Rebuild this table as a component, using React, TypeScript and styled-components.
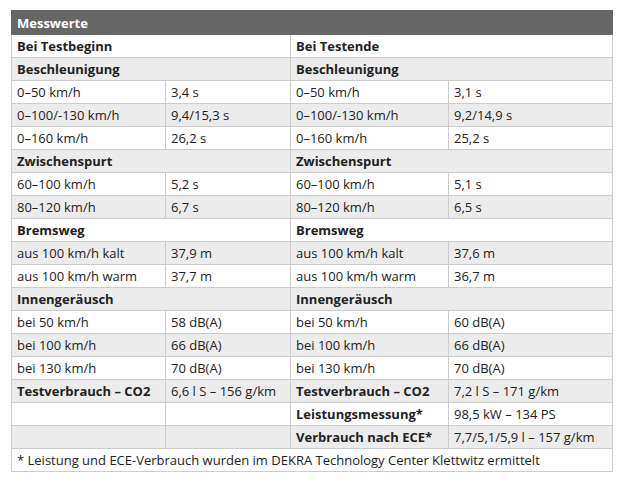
import { FC } from "react";
import styled, { createGlobalStyle } from "styled-components";

type Half =
  | { kind: "section"; title: string }
  | { kind: "data"; label: string; value: string; bold?: boolean }
  | { kind: "empty" };

type RowType = [Half, Half];

const GlobalStyle = createGlobalStyle`
  body {
    margin: 0;
    background: #ffffff;
    font-family: "Open Sans", "Liberation Sans", sans-serif;
    color: #222222;
  }
`;

const Page = styled.div`
  padding: 10px 8px 0 11px;
`;

const Table = styled.table`
  border-collapse: collapse;
  width: 601px;
  table-layout: fixed;
  font-size: 13px;
  line-height: 18px;
`;

const HeadCell = styled.th`
  background: #666666;
  color: #ffffff;
  font-weight: 700;
  text-align: left;
  height: 24px;
  padding: 0 5px;
  border: 1px solid #666666;
  box-sizing: border-box;
`;

const Row = styled.tr`
  background: #ffffff;

  &:nth-child(even) {
    background: #ececec;
  }
`;

const Cell = styled.td<{ $bold?: boolean }>`
  height: 23px;
  padding: 0 5px;
  border: 1px solid #cccccc;
  box-sizing: border-box;
  font-weight: ${({ $bold }) => ($bold ? 700 : 400)};
  white-space: nowrap;
  vertical-align: middle;
`;

const rows: RowType[] = [
  [
    { kind: "section", title: "Bei Testbeginn" },
    { kind: "section", title: "Bei Testende" },
  ],
  [
    { kind: "section", title: "Beschleunigung" },
    { kind: "section", title: "Beschleunigung" },
  ],
  [
    { kind: "data", label: "0–50 km/h", value: "3,4 s" },
    { kind: "data", label: "0–50 km/h", value: "3,1 s" },
  ],
  [
    { kind: "data", label: "0–100/-130 km/h", value: "9,4/15,3 s" },
    { kind: "data", label: "0–100/-130 km/h", value: "9,2/14,9 s" },
  ],
  [
    { kind: "data", label: "0–160 km/h", value: "26,2 s" },
    { kind: "data", label: "0–160 km/h", value: "25,2 s" },
  ],
  [
    { kind: "section", title: "Zwischenspurt" },
    { kind: "section", title: "Zwischenspurt" },
  ],
  [
    { kind: "data", label: "60–100 km/h", value: "5,2 s" },
    { kind: "data", label: "60–100 km/h", value: "5,1 s" },
  ],
  [
    { kind: "data", label: "80–120 km/h", value: "6,7 s" },
    { kind: "data", label: "80–120 km/h", value: "6,5 s" },
  ],
  [
    { kind: "section", title: "Bremsweg" },
    { kind: "section", title: "Bremsweg" },
  ],
  [
    { kind: "data", label: "aus 100 km/h kalt", value: "37,9 m" },
    { kind: "data", label: "aus 100 km/h kalt", value: "37,6 m" },
  ],
  [
    { kind: "data", label: "aus 100 km/h warm", value: "37,7 m" },
    { kind: "data", label: "aus 100 km/h warm", value: "36,7 m" },
  ],
  [
    { kind: "section", title: "Innengeräusch" },
    { kind: "section", title: "Innengeräusch" },
  ],
  [
    { kind: "data", label: "bei 50 km/h", value: "58 dB(A)" },
    { kind: "data", label: "bei 50 km/h", value: "60 dB(A)" },
  ],
  [
    { kind: "data", label: "bei 100 km/h", value: "66 dB(A)" },
    { kind: "data", label: "bei 100 km/h", value: "66 dB(A)" },
  ],
  [
    { kind: "data", label: "bei 130 km/h", value: "70 dB(A)" },
    { kind: "data", label: "bei 130 km/h", value: "70 dB(A)" },
  ],
  [
    { kind: "data", label: "Testverbrauch – CO2", value: "6,6 l S – 156 g/km", bold: true },
    { kind: "data", label: "Testverbrauch – CO2", value: "7,2 l S – 171 g/km", bold: true },
  ],
  [
    { kind: "empty" },
    { kind: "data", label: "Leistungsmessung*", value: "98,5 kW – 134 PS", bold: true },
  ],
  [
    { kind: "empty" },
    { kind: "data", label: "Verbrauch nach ECE*", value: "7,7/5,1/5,9 l – 157 g/km", bold: true },
  ],
];

const HalfCells: FC<{ half: Half }> = ({ half }) => {
  if (half.kind === "section") {
    return (
      <Cell colSpan={2} $bold>
        {half.title}
      </Cell>
    );
  }
  if (half.kind === "empty") {
    return (
      <>
        <Cell />
        <Cell />
      </>
    );
  }
  return (
    <>
      <Cell $bold={half.bold}>{half.label}</Cell>
      <Cell>{half.value}</Cell>
    </>
  );
};

const MeasureTable: FC<{ rows: RowType[] }> = ({ rows }) => (
  <Table>
    <colgroup>
      <col style={{ width: 154 }} />
      <col style={{ width: 125 }} />
      <col style={{ width: 158 }} />
      <col style={{ width: 164 }} />
    </colgroup>
    <thead>
      <tr>
        <HeadCell colSpan={4}>Messwerte</HeadCell>
      </tr>
    </thead>
    <tbody>
      {rows.map(([left, right], i) => (
        <Row key={i}>
          <HalfCells half={left} />
          <HalfCells half={right} />
        </Row>
      ))}
      <Row>
        <Cell colSpan={4}>
          * Leistung und ECE-Verbrauch wurden im DEKRA Technology Center Klettwitz ermittelt
        </Cell>
      </Row>
    </tbody>
  </Table>
);

function App() {
  return (
    <Page>
      <GlobalStyle />
      <MeasureTable rows={rows} />
    </Page>
  );
}

export default App;
